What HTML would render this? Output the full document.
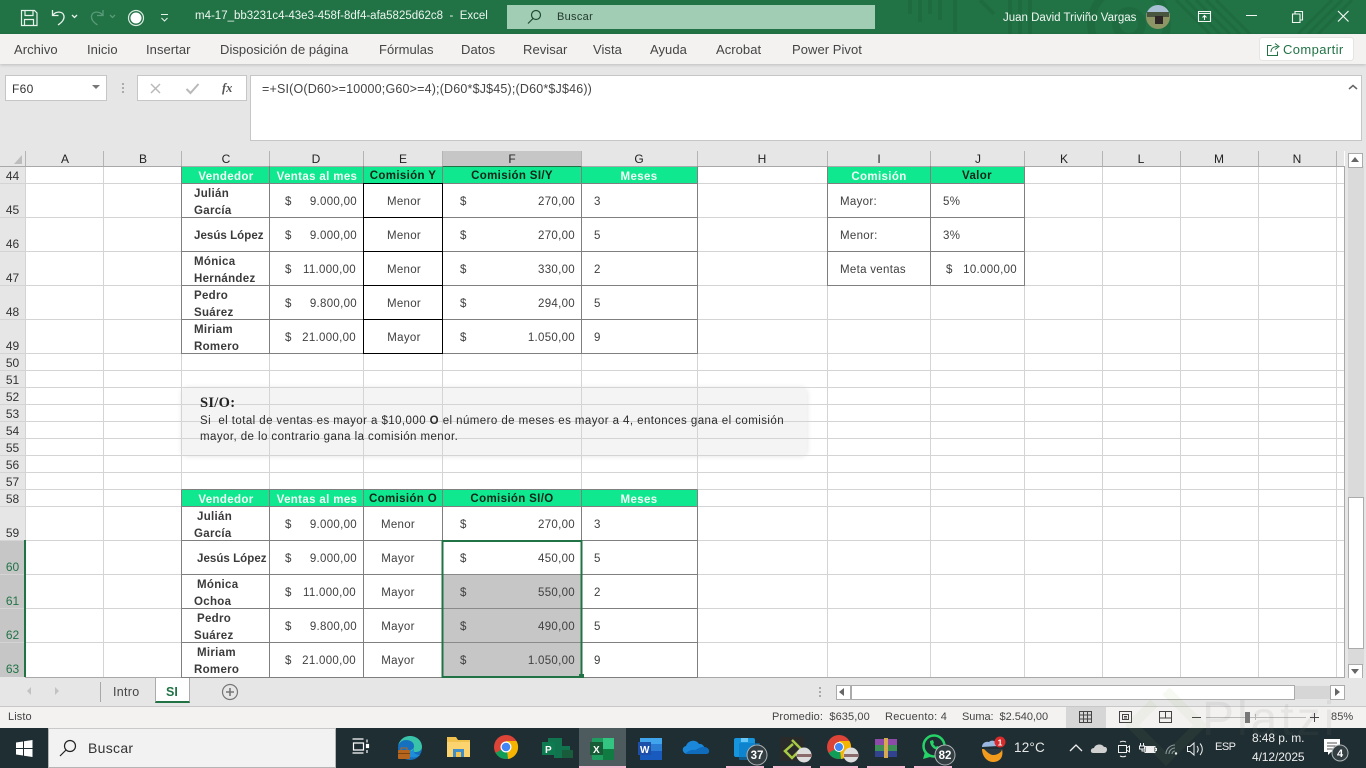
<!DOCTYPE html>
<html lang="es"><head><meta charset="utf-8"><title>Excel</title>
<style>
html,body{margin:0;padding:0;width:1366px;height:768px;overflow:hidden;background:#fff;font-family:"Liberation Sans",sans-serif}
.a{position:absolute}
.t{position:absolute;white-space:nowrap;line-height:16px;font-size:11.5px;letter-spacing:.3px;color:#404040;margin-top:1px}
.c{transform:translateX(-50%)}
.r{transform:translateX(-100%)}
.b{font-weight:bold;color:#3a3a3a}
.h{font-weight:bold;color:#f2fff8;font-size:11.5px;letter-spacing:.35px}
.k{font-weight:bold;color:#10261a;font-size:11.5px;letter-spacing:.35px}
.col{position:absolute;top:152px;line-height:15px;font-size:12px;color:#222;transform:translateX(-50%)}
.row{position:absolute;left:0;width:25px;text-align:center;font-size:12px;line-height:14px;color:#333;margin-top:1px}
.sel{color:#217346}
.tab{position:absolute;top:42px;line-height:16px;font-size:13px;letter-spacing:.05px;color:#444;white-space:nowrap}
.st{position:absolute;top:710px;line-height:15px;font-size:11px;letter-spacing:.1px;color:#444;white-space:nowrap}
</style></head><body>

<!-- title bar -->
<div class="a" style="left:0;top:0;width:1366px;height:34px;background:#217346;overflow:hidden">
<svg class="a" style="left:900px;top:0" width="466" height="34" fill="none" stroke="#1f6b40">
<path d="M10 0v14M20 0v22M30 0v14M40 0v20M55 0v32M80 0l14 14M110 0v34M120 0v34M130 0v34" stroke-width="4"/>
<circle cx="229" cy="24" r="13" stroke-width="8"/><circle cx="229" cy="24" r="38" stroke-width="8"/>
<path d="M276 0l34 34M286 0l34 34M296 0l34 34M306 0l34 34M316 0l34 34M398 34L432 0M408 34L442 0M418 34L452 0" stroke-width="3"/>
</svg>
</div>
<svg class="a" style="left:20px;top:8px" width="20" height="20" fill="none" stroke="#e8f2ec" stroke-width="1.2"><path d="M1.500 2.500h13l2.500 2.500v12.500h-15.500zM5 2.500v5h8v-5M4.500 17.500v-6h9v6"/></svg>
<svg class="a" style="left:49px;top:8px" width="32" height="20" fill="none" stroke="#e8f2ec" stroke-width="1.300"><path d="M3.500 2v5.500h6M4 7c3-4 10-4 11 1 .6 4-3 7-6 9"/><path d="M23 7l2.500 2.500L28 7"/></svg>
<svg class="a" style="left:86px;top:8px" width="32" height="20" fill="none" stroke="#5a9a78" stroke-width="1.300"><path d="M17 2v5.500h-6M16.500 7c-3-4-10-4-11 1-.6 4 3 7 6 9M24 7l2.500 2.500L29 7"/></svg>
<svg class="a" style="left:127px;top:9px" width="18" height="18"><circle cx="9" cy="9" r="7.500" fill="none" stroke="#d9ebe1" stroke-width="1.200"/><circle cx="9" cy="9" r="5.500" fill="#fff"/></svg>
<svg class="a" style="left:159px;top:12px" width="12" height="12" fill="none" stroke="#e8f2ec"><path d="M2 2.500h7M2.500 6l3 3 3-3"/></svg>
<div class="t" style="left:195px;top:7px;font-size:11.5px;letter-spacing:0;color:#edf5f0">m4-17_bb3231c4-43e3-458f-8df4-afa5825d62c8&nbsp; -&nbsp; Excel</div>
<div class="a" style="left:507px;top:5px;width:368px;height:24px;background:#a0cdb4"></div>
<svg class="a" style="left:526px;top:9px" width="16" height="16" fill="none" stroke="#1f4b33" stroke-width="1.200"><circle cx="10" cy="6" r="4.500"/><path d="M7 9.500L2 14.500"/></svg>
<div class="t" style="left:557px;top:8px;font-size:11px;color:#24392d">Buscar</div>
<div class="t" style="left:1003px;top:9px;font-size:11.5px;letter-spacing:0;color:#f1f7f3">Juan David Triviño Vargas</div>
<svg class="a" style="left:1146px;top:5px" width="24" height="24"><clipPath id="av"><circle cx="12" cy="12" r="12"/></clipPath><g clip-path="url(#av)"><rect width="24" height="10" fill="#a9c0d4"/><rect y="9" width="24" height="15" fill="#8d9565"/><rect x="1" y="7" width="22" height="5" fill="#4a5540"/><rect x="9" y="11" width="8" height="8" fill="#2e2526"/></g></svg>
<svg class="a" style="left:1197px;top:9px" width="16" height="15" fill="none" stroke="#f2f7f4" stroke-width="1.100"><path d="M1.500 2.500h12v10h-12zM1.500 4.500h12M7.500 11V6.500M5.500 8.500l2-2 2 2"/></svg>
<div class="a" style="left:1246px;top:15px;width:11px;height:1px;background:#f2f7f4"></div>
<svg class="a" style="left:1291px;top:10px" width="14" height="14" fill="none" stroke="#f2f7f4" stroke-width="1.100"><path d="M1.500 4h7.500v8.500h-7.500zM4 4V1.500h7.500V10H9"/></svg>
<svg class="a" style="left:1337px;top:10px" width="13" height="13" fill="none" stroke="#f2f7f4" stroke-width="1.200"><path d="M1 1l10.500 10.500M11.500 1L1 11.500"/></svg>

<!-- formula area -->
<div class="a" style="left:0;top:64px;width:1366px;height:87px;background:#e6e6e6"></div>
<!-- ribbon tabs -->
<div class="a" style="left:0;top:34px;width:1366px;height:30px;background:#f3f2f1;box-shadow:0 1px 3px rgba(0,0,0,.18)"></div>
<div class="tab" style="left:14px">Archivo</div><div class="tab" style="left:87px">Inicio</div><div class="tab" style="left:146px">Insertar</div><div class="tab" style="left:220px">Disposición de página</div><div class="tab" style="left:379px">Fórmulas</div><div class="tab" style="left:461px">Datos</div><div class="tab" style="left:523px">Revisar</div><div class="tab" style="left:593px">Vista</div><div class="tab" style="left:650px">Ayuda</div><div class="tab" style="left:716px">Acrobat</div><div class="tab" style="left:792px">Power Pivot</div>
<div class="a" style="left:1260px;top:38px;width:93px;height:22px;background:#fff;border-radius:2px;box-shadow:0 0 1px rgba(0,0,0,.35)"></div>
<svg class="a" style="left:1266px;top:42px" width="16" height="15" fill="none" stroke="#217346"><path d="M5.500 3.500h-4v10h10v-4M5 10c0-4 3-5.500 6.500-5.500M9 1.500l4 3-4 3"/></svg>
<div class="t" style="left:1283px;top:41px;font-size:13px;letter-spacing:.4px;color:#217346">Compartir</div>

<div class="a" style="left:5px;top:75px;width:100px;height:24px;background:#fff;border:1px solid #c6c6c6"></div>
<div class="t" style="left:12px;top:80px;font-size:12px;color:#333">F60</div>
<svg class="a" style="left:92px;top:85px" width="9" height="5"><path d="M0 0h8L4 4z" fill="#777"/></svg>
<div class="a" style="left:122px;top:83px;width:2px;height:2px;background:#aaa;box-shadow:0 4px #aaa,0 8px #aaa"></div>
<div class="a" style="left:137px;top:75px;width:108px;height:24px;background:#fff;border:1px solid #c6c6c6"></div>
<svg class="a" style="left:150px;top:83px" width="12" height="12" fill="none" stroke="#b9b9b9" stroke-width="1.500"><path d="M1 1l9 9M10 1l-9 9"/></svg>
<svg class="a" style="left:185px;top:82px" width="15" height="13" fill="none" stroke="#b9b9b9" stroke-width="2"><path d="M1.500 7l4 4L13.500 2"/></svg>
<div class="t" style="left:222px;top:79px;font-family:'Liberation Serif',serif;font-style:italic;font-weight:bold;font-size:12.500px;color:#555;letter-spacing:0">fx</div>
<div class="a" style="left:250px;top:75px;width:1110px;height:64px;background:#fff;border:1px solid #c6c6c6"></div>
<div class="t" style="left:262px;top:80px;font-size:12.5px;letter-spacing:.18px;color:#444">=+SI(O(D60&gt;=10000;G60&gt;=4);(D60*$J$45);(D60*$J$46))</div>
<svg class="a" style="left:1348px;top:84px" width="10" height="7" fill="none" stroke="#666" stroke-width="1.500"><path d="M1 5l4-3.500L9 5"/></svg>

<!-- sheet background & box -->
<div class="a" style="left:25px;top:166px;width:1319px;height:512px;background:#fff"></div>
<div class="a" style="left:182px;top:388px;width:625px;height:68px;background:#f4f4f4;border-radius:6px;box-shadow:0 0 6px rgba(0,0,0,.12)"></div>

<!-- grid -->
<svg class="a" style="left:0;top:151px" width="1366" height="530" shape-rendering="crispEdges">
<rect x="0" y="0" width="1344" height="15" fill="#e6e6e6"/>
<rect x="0" y="15" width="25" height="512" fill="#e6e6e6"/>
<rect x="442" y="0" width="139" height="15" fill="#c6c6c6"/>
<rect x="0" y="389" width="25" height="137" fill="#c6c6c6"/>
<g stroke="#d4d4d4" fill="none">
<path d="M25.500 15V526M103.500 15V526M181.500 15V526M269.500 15V526M363.500 15V526M442.500 15V526M581.500 15V526M697.500 15V526M827.500 15V526M930.500 15V526M1024.500 15V526M1102.500 15V526M1180.500 15V526M1258.500 15V526M1336.500 15V526"/>
<path d="M0 32.500H1344M0 66.500H1344M0 100.500H1344M0 134.500H1344M0 168.500H1344M0 202.500H1344M0 219.500H1344M0 236.500H1344M0 253.500H1344M0 270.500H1344M0 287.500H1344M0 304.500H1344M0 321.500H1344M0 338.500H1344M0 355.500H1344M0 389.500H1344M0 423.500H1344M0 457.500H1344M0 491.500H1344"/>
</g>
<path d="M25.500 0V15M103.500 0V15M181.500 0V15M269.500 0V15M363.500 0V15M442.500 0V15M581.500 0V15M697.500 0V15M827.500 0V15M930.500 0V15M1024.500 0V15M1102.500 0V15M1180.500 0V15M1258.500 0V15M1336.500 0V15" stroke="#b4b4b4" fill="none"/>
<path d="M0 15.500H1344M1344.500 15V527M25 526.500H1344" stroke="#a8a8a8" fill="none"/>
<path d="M442 15.500H581" stroke="#217346" fill="none"/>
<!-- green headers -->
<rect x="182" y="16" width="515" height="16" fill="#10e88f"/>
<rect x="828" y="16" width="196" height="16" fill="#10e88f"/>
<rect x="182" y="339" width="515" height="16" fill="#10e88f"/>
<g stroke="#7f7f7f" fill="none">
<path d="M181.500 15.500V202.500H697.500V15.500M269.500 15V203M363.500 15V203M442.500 15V203M581.500 15V203M181 32.500H698M181 66.500H698M181 100.500H698M181 134.500H698M181 168.500H698"/>
<path d="M827.500 15.500V134.500H1024.500V15.500M930.500 15V135M827 32.500H1025M827 66.500H1025M827 100.500H1025"/>
<path d="M181.500 338.500H697.500M181.500 338.500V526.500H697.500V338.500M269.500 338V527M363.500 338V527M442.500 338V527M581.500 338V527M181 355.500H698M181 389.500H698M181 423.500H698M181 457.500H698M181 491.500H698"/>
</g>
<path d="M363.500 32.500H442.500V202.500H363.500ZM363 66.500H443M363 100.500H443M363 134.500H443M363 168.500H443" stroke="#000" fill="none"/>
<!-- selection -->
<rect x="443" y="424" width="138" height="102" fill="#c6c6c6"/>
<path d="M443 423.500H581M443 457.500H581M443 491.500H581" stroke="#8a8a8a" fill="none"/>
<rect x="442.500" y="390" width="139" height="136" fill="none" stroke="#217346" stroke-width="2"/>
<rect x="579" y="523" width="5" height="5" fill="#217346"/>
<rect x="24" y="389" width="2" height="137" fill="#217346"/>
</svg>

<!-- headers -->
<div class="col" style="left:65px">A</div><div class="col" style="left:143px">B</div><div class="col" style="left:226px">C</div><div class="col" style="left:316px">D</div><div class="col" style="left:403px">E</div><div class="col" style="left:512px">F</div><div class="col" style="left:639px">G</div><div class="col" style="left:762px">H</div><div class="col" style="left:879px">I</div><div class="col" style="left:978px">J</div><div class="col" style="left:1064px">K</div><div class="col" style="left:1141px">L</div><div class="col" style="left:1219px">M</div><div class="col" style="left:1297px">N</div>
<svg class="a" style="left:14px;top:155px" width="10" height="10"><path d="M8 0v9H0z" fill="#bdbdbd"/></svg>
<div class="row" style="top:168px">44</div><div class="row" style="top:202px">45</div><div class="row" style="top:236px">46</div><div class="row" style="top:270px">47</div><div class="row" style="top:304px">48</div><div class="row" style="top:338px">49</div><div class="row" style="top:355px">50</div><div class="row" style="top:372px">51</div><div class="row" style="top:389px">52</div><div class="row" style="top:406px">53</div><div class="row" style="top:423px">54</div><div class="row" style="top:440px">55</div><div class="row" style="top:457px">56</div><div class="row" style="top:474px">57</div><div class="row" style="top:491px">58</div><div class="row" style="top:525px">59</div><div class="row sel" style="top:559px">60</div><div class="row sel" style="top:593px">61</div><div class="row sel" style="top:627px">62</div><div class="row sel" style="top:661px">63</div>

<!-- top table -->
<div class="t h c" style="left:226px;top:168px">Vendedor</div><div class="t h c" style="left:317px;top:168px">Ventas al mes</div><div class="t k c" style="left:403px;top:167px">Comisión Y</div><div class="t k c" style="left:512px;top:167px">Comisión SI/Y</div><div class="t h c" style="left:639px;top:168px">Meses</div>
<div class="t b" style="left:194px;top:185px">Julián</div><div class="t b" style="left:194px;top:202px">García</div>
<div class="t b" style="left:194px;top:227px;letter-spacing:.05px">Jesús López</div>
<div class="t b" style="left:194px;top:253px">Mónica</div><div class="t b" style="left:194px;top:270px">Hernández</div>
<div class="t b" style="left:194px;top:287px">Pedro</div><div class="t b" style="left:194px;top:304px">Suárez</div>
<div class="t b" style="left:194px;top:321px">Miriam</div><div class="t b" style="left:194px;top:338px">Romero</div>
<div class="t" style="left:285px;top:193px">$</div><div class="t r" style="left:357px;top:193px">9.000,00</div>
<div class="t" style="left:285px;top:227px">$</div><div class="t r" style="left:357px;top:227px">9.000,00</div>
<div class="t" style="left:285px;top:261px">$</div><div class="t r" style="left:356px;top:261px">11.000,00</div>
<div class="t" style="left:285px;top:295px">$</div><div class="t r" style="left:357px;top:295px">9.800,00</div>
<div class="t" style="left:285px;top:329px">$</div><div class="t r" style="left:356px;top:329px">21.000,00</div>
<div class="t c" style="left:404px;top:193px">Menor</div><div class="t c" style="left:404px;top:227px">Menor</div><div class="t c" style="left:404px;top:261px">Menor</div><div class="t c" style="left:404px;top:295px">Menor</div><div class="t c" style="left:404px;top:329px">Mayor</div>
<div class="t" style="left:460px;top:193px">$</div><div class="t r" style="left:575px;top:193px">270,00</div>
<div class="t" style="left:460px;top:227px">$</div><div class="t r" style="left:575px;top:227px">270,00</div>
<div class="t" style="left:460px;top:261px">$</div><div class="t r" style="left:575px;top:261px">330,00</div>
<div class="t" style="left:460px;top:295px">$</div><div class="t r" style="left:575px;top:295px">294,00</div>
<div class="t" style="left:460px;top:329px">$</div><div class="t r" style="left:575px;top:329px">1.050,00</div>
<div class="t" style="left:594px;top:193px">3</div><div class="t" style="left:594px;top:227px">5</div><div class="t" style="left:594px;top:261px">2</div><div class="t" style="left:594px;top:295px">5</div><div class="t" style="left:594px;top:329px">9</div>

<!-- right table -->
<div class="t h c" style="left:879px;top:168px">Comisión</div><div class="t k c" style="left:977px;top:167px">Valor</div>
<div class="t" style="left:840px;top:193px">Mayor:</div><div class="t" style="left:943px;top:193px">5%</div>
<div class="t" style="left:840px;top:227px">Menor:</div><div class="t" style="left:943px;top:227px">3%</div>
<div class="t" style="left:840px;top:261px">Meta ventas</div><div class="t" style="left:946px;top:261px">$</div><div class="t r" style="left:1017px;top:261px">10.000,00</div>

<!-- note -->
<div class="t" style="left:200px;top:394px;font-family:'Liberation Serif',serif;font-weight:bold;font-size:14.500px;color:#222;letter-spacing:.3px">SI/O:</div>
<div class="t" style="left:200px;top:412px;color:#2b2b2b;letter-spacing:.43px">Si&nbsp; el total de ventas es mayor a $10,000 <b>O</b> el número de meses es mayor a 4, entonces gana el comisión</div>
<div class="t" style="left:200px;top:428px;color:#2b2b2b;letter-spacing:.43px">mayor, de lo contrario gana la comisión menor.</div>

<!-- lower table -->
<div class="t h c" style="left:226px;top:491px">Vendedor</div><div class="t h c" style="left:317px;top:491px">Ventas al mes</div><div class="t k c" style="left:403px;top:490px">Comisión O</div><div class="t k c" style="left:512px;top:490px">Comisión SI/O</div><div class="t h c" style="left:639px;top:491px">Meses</div>
<div class="t b" style="left:197px;top:508px">Julián</div><div class="t b" style="left:194px;top:525px">García</div>
<div class="t b" style="left:197px;top:550px;letter-spacing:.05px">Jesús López</div>
<div class="t b" style="left:197px;top:576px">Mónica</div><div class="t b" style="left:194px;top:593px">Ochoa</div>
<div class="t b" style="left:197px;top:610px">Pedro</div><div class="t b" style="left:194px;top:627px">Suárez</div>
<div class="t b" style="left:197px;top:644px">Miriam</div><div class="t b" style="left:194px;top:661px">Romero</div>
<div class="t" style="left:285px;top:516px">$</div><div class="t r" style="left:357px;top:516px">9.000,00</div>
<div class="t" style="left:285px;top:550px">$</div><div class="t r" style="left:357px;top:550px">9.000,00</div>
<div class="t" style="left:285px;top:584px">$</div><div class="t r" style="left:356px;top:584px">11.000,00</div>
<div class="t" style="left:285px;top:618px">$</div><div class="t r" style="left:357px;top:618px">9.800,00</div>
<div class="t" style="left:285px;top:652px">$</div><div class="t r" style="left:356px;top:652px">21.000,00</div>
<div class="t c" style="left:398px;top:516px">Menor</div><div class="t c" style="left:398px;top:550px">Mayor</div><div class="t c" style="left:398px;top:584px">Mayor</div><div class="t c" style="left:398px;top:618px">Mayor</div><div class="t c" style="left:398px;top:652px">Mayor</div>
<div class="t" style="left:460px;top:516px">$</div><div class="t r" style="left:575px;top:516px">270,00</div>
<div class="t" style="left:460px;top:550px">$</div><div class="t r" style="left:575px;top:550px">450,00</div>
<div class="t" style="left:460px;top:584px">$</div><div class="t r" style="left:575px;top:584px">550,00</div>
<div class="t" style="left:460px;top:618px">$</div><div class="t r" style="left:575px;top:618px">490,00</div>
<div class="t" style="left:460px;top:652px">$</div><div class="t r" style="left:575px;top:652px">1.050,00</div>
<div class="t" style="left:594px;top:516px">3</div><div class="t" style="left:594px;top:550px">5</div><div class="t" style="left:594px;top:584px">2</div><div class="t" style="left:594px;top:618px">5</div><div class="t" style="left:594px;top:652px">9</div>

<!-- vertical scrollbar -->
<div class="a" style="left:1345px;top:151px;width:21px;height:527px;background:#e6e6e6"></div>
<div class="a" style="left:1348px;top:166px;width:16px;height:499px;background:#dadada"></div>
<div class="a" style="left:1348px;top:153px;width:13px;height:13px;background:#fff;border:1px solid #ababab"></div>
<svg class="a" style="left:1351px;top:157px" width="9" height="6"><path d="M0 5h8L4 0z" fill="#666"/></svg>
<div class="a" style="left:1348px;top:497px;width:14px;height:150px;background:#fff;border:1px solid #ababab"></div>
<div class="a" style="left:1348px;top:664px;width:13px;height:13px;background:#fff;border:1px solid #ababab"></div>
<svg class="a" style="left:1351px;top:669px" width="9" height="6"><path d="M0 0h8L4 5z" fill="#666"/></svg>

<!-- sheet tabs -->
<div class="a" style="left:0;top:678px;width:1366px;height:29px;background:#e6e6e6;border-bottom:1px solid #c8c8c8;box-sizing:border-box"></div>
<svg class="a" style="left:26px;top:686px" width="36" height="11" fill="#c2c2c2"><path d="M5 1v8L1 5zM29 1v8l4-4z"/></svg>
<div class="a" style="left:100px;top:682px;width:1px;height:20px;background:#a8a8a8"></div>
<div class="t" style="left:113px;top:683px;font-size:12.500px;color:#444">Intro</div>
<div class="a" style="left:155px;top:678px;width:33px;height:23px;background:#fff;border-left:1px solid #ababab;border-right:1px solid #ababab;border-bottom:2px solid #217346"></div>
<div class="t" style="left:166px;top:683px;font-size:12.500px;font-weight:bold;color:#217346;letter-spacing:0">SI</div>
<svg class="a" style="left:221px;top:683px" width="18" height="18" fill="none" stroke="#777" stroke-width="1.200"><circle cx="9" cy="9" r="7.500"/><path d="M5 9h8M9 5v8" stroke-width="1.600"/></svg>
<div class="a" style="left:819px;top:687px;width:2px;height:2px;background:#aaa;box-shadow:0 4px #aaa,0 8px #aaa"></div>
<div class="a" style="left:836px;top:685px;width:13px;height:13px;background:#fff;border:1px solid #ababab"></div>
<svg class="a" style="left:839px;top:688px" width="7" height="9"><path d="M5 0v8L0 4z" fill="#666"/></svg>
<div class="a" style="left:851px;top:685px;width:442px;height:13px;background:#fff;border:1px solid #ababab"></div>
<div class="a" style="left:1295px;top:686px;width:35px;height:13px;background:#d6d6d6"></div>
<div class="a" style="left:1330px;top:685px;width:13px;height:13px;background:#fff;border:1px solid #ababab"></div>
<svg class="a" style="left:1334px;top:688px" width="7" height="9"><path d="M1 0v8l5-4z" fill="#666"/></svg>

<!-- status bar -->
<div class="a" style="left:0;top:707px;width:1366px;height:21px;background:#f3f2f1"></div>
<div class="st" style="left:8px">Listo</div>
<div class="st" style="left:772px">Promedio:&nbsp; $635,00</div>
<div class="st" style="left:885px;letter-spacing:.25px">Recuento: 4</div>
<div class="st" style="left:962px;letter-spacing:-.05px">Suma:&nbsp; $2.540,00</div>
<div class="a" style="left:1066px;top:707px;width:40px;height:21px;background:#d6d6d6"></div>
<svg class="a" style="left:1078px;top:709px" width="16" height="16" fill="none" stroke="#444"><path d="M1.500 2.500h12v11h-12zM1.500 6h12M1.500 10h12M5.500 2.500v11M9.500 2.500v11"/></svg>
<svg class="a" style="left:1118px;top:709px" width="16" height="16" fill="none" stroke="#444"><path d="M1.500 2.500h12v11h-12zM4.500 5.500h6v5h-6zM6 7.500h3M6 9h3"/></svg>
<svg class="a" style="left:1158px;top:709px" width="16" height="16" fill="none" stroke="#444"><path d="M1.500 2.500h12v11h-12zM7.500 2.500v6.500h-6M7.500 9h6"/></svg>
<div class="a" style="left:1192px;top:717px;width:9px;height:1px;background:#444"></div>
<div class="a" style="left:1206px;top:717px;width:100px;height:1px;background:#b8b8b8"></div>
<div class="a" style="left:1245px;top:712px;width:5px;height:11px;background:#777"></div>
<div class="a" style="left:1255px;top:714px;width:1px;height:6px;background:#b8b8b8"></div>
<svg class="a" style="left:1309px;top:712px" width="11" height="11" stroke="#444"><path d="M1 5.500h9M5.500 1v9"/></svg>
<div class="st" style="left:1331px">85%</div>

<!-- taskbar -->
<div class="a" style="left:0;top:728px;width:1366px;height:40px;background:#1f2e33"></div>
<svg class="a" style="left:16px;top:740px" width="17" height="17" fill="#fff"><path d="M0 2.500l7-1v6.500H0zM8 1.300l8.500-1.300v8H8zM0 9h7v6.500l-7-1zM8 9h8.500v8L8 15.700z"/></svg>
<div class="a" style="left:48px;top:728px;width:288px;height:40px;background:#f2f2f2;border:1px solid #b5b5b5;box-sizing:border-box;border-top-color:#c9c9c9"></div>
<svg class="a" style="left:59px;top:739px" width="18" height="18" fill="none" stroke="#222" stroke-width="1.200"><circle cx="11" cy="7" r="5.500"/><path d="M7 11l-6 6"/></svg>
<div class="t" style="left:88px;top:739px;font-size:14px;color:#333">Buscar</div>
<div class="a" style="left:579px;top:728px;width:47px;height:40px;background:#4d5b5f"></div>
<svg class="a" style="left:0;top:766px" width="1366" height="2" fill="#f6b9cf"><rect x="579" width="47" height="2"/><rect x="726" width="38" height="2"/><rect x="773" width="38" height="2"/><rect x="820" width="38" height="2"/><rect x="867" width="38" height="2"/><rect x="914" width="38" height="2"/></svg>

<svg class="a" style="left:340px;top:728px" width="640" height="38">
<!-- task view -->
<g fill="none" stroke="#fff" stroke-width="1.200"><path d="M12.500 11h11M12.500 25h11M13.500 15h10v7h-10zM27 11.500v3M27 22v3"/><rect x="26.500" y="16.500" width="2" height="3" fill="#fff"/></g>
<!-- edge -->
<circle cx="70" cy="20" r="12" fill="#1570c0"/><path d="M58 18c2-8 8-10 12-10 7 0 12 5 12 11 0 3-3 5-6 5-3 0-5-1-6-2 2 0 4-1 4-4 0-4-4-6-8-6-4 0-7 3-8 6z" fill="#39c3a8"/><path d="M74 19c0 3-2 4-5 4-3 0-4 2-1 5 3 2 9 2 12-1-3 0-6-1-6-4z" fill="#1f8ed8"/><rect x="58" y="22" width="12" height="9" rx="1" fill="#b5651d"/><rect x="61" y="20" width="6" height="3" fill="none" stroke="#b5651d"/><rect x="58" y="25" width="12" height="1" fill="#7c430f"/>
<!-- folder -->
<path d="M107 9h9l2 3h12v17h-23z" fill="#f1c34e"/><rect x="107" y="14" width="23" height="15" fill="#fbd46f"/><rect x="113" y="21" width="11" height="8" fill="#3f8ec9"/><rect x="116" y="24" width="5" height="5" fill="#f1c34e"/>
<!-- chrome -->
<circle cx="166" cy="19" r="12" fill="#dc4437"/><path d="M166 19l-10.400 6A12 12 0 0 0 166 31a12 12 0 0 0 8-3z" fill="#0f9d58"/><path d="M166 13h10.400A12 12 0 0 1 168 31z" fill="#f4b400"/><circle cx="166" cy="19" r="5.500" fill="#fff"/><circle cx="166" cy="19" r="4.300" fill="#4285f4"/>
<!-- project -->
<path d="M208 10h14v8h8v8h-8v4h-8v-6h-6z" fill="#10754e"/><rect x="222" y="22" width="11" height="8" fill="#185c3c"/><rect x="202" y="14" width="13" height="13" fill="#0e7a4f"/><text x="205" y="25" font-family="Liberation Sans" font-size="10" font-weight="bold" fill="#fff">P</text>
<!-- excel -->
<rect x="252" y="10" width="22" height="22" rx="1" fill="#1f9d60"/><rect x="263" y="10" width="11" height="11" fill="#33c481"/><rect x="263" y="21" width="11" height="11" fill="#107c41"/><rect x="250" y="14" width="13" height="13" fill="#185c37"/><text x="253" y="25" font-family="Liberation Sans" font-size="10" font-weight="bold" fill="#fff">X</text>
<!-- word -->
<rect x="300" y="10" width="22" height="22" rx="1" fill="#2b7cd3"/><rect x="300" y="10" width="22" height="6" fill="#41a5ee"/><rect x="300" y="23" width="22" height="9" fill="#185abd"/><rect x="298" y="14" width="13" height="13" fill="#1d4fa8"/><text x="300" y="25" font-family="Liberation Sans" font-size="10" font-weight="bold" fill="#fff">W</text>
<!-- onedrive -->
<path d="M348 26c-6 0-7-7-2-8 2-6 10-7 13-2 6-1 9 10 3 10z" fill="#1b87d8"/><path d="M346 26h20c5 0 4-7-2-7-3-1-8 3-9 3-5-1-11 4-9 4z" fill="#0f6cbd"/>
<!-- blue app -->
<rect x="394" y="10" width="21" height="19" rx="2" fill="#1695dd"/><rect x="399" y="15" width="21" height="17" rx="1" fill="#0a79c4" opacity=".6"/><rect x="401" y="10" width="7" height="4" fill="#6ac6f3"/>
<circle cx="417" cy="27" r="10" fill="#333f43" stroke="#aeb4b6"/><text x="417" y="31" text-anchor="middle" font-family="Liberation Sans" font-size="11.500" font-weight="bold" fill="#fff">37</text>
<!-- app 2 -->
<rect x="440" y="9" width="24" height="24" fill="#2a2a2a"/><path d="M452 12l9 9-9 9-7-7 8-7" fill="none" stroke="#a8c945" stroke-width="2.500"/>
<circle cx="464" cy="27" r="7.500" fill="#ddd"/><rect x="457" y="26" width="15" height="3" fill="#8a6a6a"/>
<!-- chrome 2 -->
<circle cx="499" cy="19" r="12" fill="#dc4437"/><path d="M499 19l-10.400 6A12 12 0 0 0 499 31a12 12 0 0 0 8-3z" fill="#0f9d58"/><path d="M499 13h10.400A12 12 0 0 1 501 31z" fill="#f4b400"/><circle cx="499" cy="19" r="4.500" fill="#4285f4" stroke="#fff"/>
<circle cx="511" cy="27" r="7.500" fill="#ddd"/><rect x="504" y="26" width="15" height="3" fill="#8a6a6a"/>
<!-- winrar -->
<rect x="535" y="11" width="22" height="6" fill="#8e4aa8"/><rect x="535" y="17" width="22" height="6" fill="#3d8f56"/><rect x="535" y="23" width="22" height="6" fill="#31438f"/><rect x="544" y="10" width="4" height="20" fill="#d6a84f"/>
<!-- whatsapp -->
<circle cx="594" cy="18" r="10.500" fill="none" stroke="#25d366" stroke-width="2.500"/><path d="M585 24l-2 7 7-2z" fill="#25d366"/><path d="M590 13c0 5 4 9 9 9l1-3-3-1-1 1c-1-1-2-2-3-3l1-1-1-3z" fill="#25d366"/>
<circle cx="605" cy="27" r="10" fill="#333f43" stroke="#aeb4b6"/><text x="605" y="31" text-anchor="middle" font-family="Liberation Sans" font-size="11.500" font-weight="bold" fill="#fff">82</text>
</svg>

<!-- watermark -->
<div class="t" style="left:1202px;top:694px;font-size:48px;line-height:50px;letter-spacing:3px;color:rgba(120,120,120,.1);height:40px;overflow:hidden">Platzi</div>
<svg class="a" style="left:1126px;top:685px" width="80" height="83" fill="none" stroke="rgba(140,190,90,.07)" stroke-width="10"><path d="M40 6l34 34-34 34L6 40l22-22"/></svg>

<!-- tray -->
<svg class="a" style="left:980px;top:734px" width="30" height="30"><path d="M2 13c0-4 4-6 7-5 3-3 8-1 9 4z" fill="#9ab9e0"/><path d="M2 15h20c2 9-3 13-9 13S2 22 2 15z" fill="#f29b1d"/><path d="M4 15h18c0 4-8 8-12 5-2-1-4-3-6-5z" fill="#2b3a42"/><circle cx="20" cy="8" r="5.500" fill="#d92b2b"/><text x="20" y="11.500" text-anchor="middle" font-family="Liberation Sans" font-size="8.500" font-weight="bold" fill="#fff">1</text></svg>
<div class="t" style="left:1014px;top:739px;font-size:13.5px;color:#e8e8e8;letter-spacing:.2px">12°C</div>
<svg class="a" style="left:1066px;top:738px" width="150" height="22" fill="none" stroke="#f0f0f0">
<path d="M4 13l6-6 6 6" stroke-width="1.300"/>
<path d="M27 15c-3 0-3-5 1-5 1-4 8-5 10-1 4-1 4 6 0 6z" fill="#d0d0d0" stroke="none"/>
<path d="M52.500 7.500h8v7h-8zM60.500 10l3-2v6l-3-2M54 4q3-1.500 6 0M54 18q3 1.500 6 0" stroke-width="1"/>
<path d="M74.500 5v3M77.500 5v3M73.500 8h5v3h-5zM76 11v2h3M79 8.500h10v6H79zM89 10.500h1.500v2H89" stroke-width="1"/>
<rect x="80" y="9" width="8" height="5" fill="#f0f0f0" stroke="none"/>
<path d="M100 16a9 9 0 0 1 9-9M103 16a6 6 0 0 1 6-6M106 16a3 3 0 0 1 3-3" stroke="#8f9a9d" stroke-width="1.100"/><circle cx="110" cy="15.500" r="1.200" fill="#f0f0f0" stroke="none"/>
<path d="M121.500 8.500h2.500l4-3.500v12l-4-3.500h-2.500zM131 8c1.500 2 1.500 4.500 0 6.500M134 5.500c3 3.500 3 8 0 11.500" stroke-width="1"/>
</svg>
<div class="t" style="left:1215px;top:738px;font-size:11px;color:#eee;letter-spacing:-.5px">ESP</div>
<div class="t" style="left:1252px;top:729px;font-size:12px;color:#eee;letter-spacing:-.1px">8:48 p. m.</div>
<div class="t" style="left:1252px;top:748px;font-size:12px;color:#eee;letter-spacing:-.1px">4/12/2025</div>
<svg class="a" style="left:1323px;top:737px" width="32" height="28"><path d="M1 2h16v13H8l-3 3v-3H1z" fill="#fff"/><path d="M4 6h10M4 9h10M4 12h7" stroke="#555"/><circle cx="17" cy="16" r="8" fill="#333f43" stroke="#aeb4b6"/><text x="17" y="20" text-anchor="middle" font-family="Liberation Sans" font-size="11" font-weight="bold" fill="#fff">4</text></svg>

</body></html>
